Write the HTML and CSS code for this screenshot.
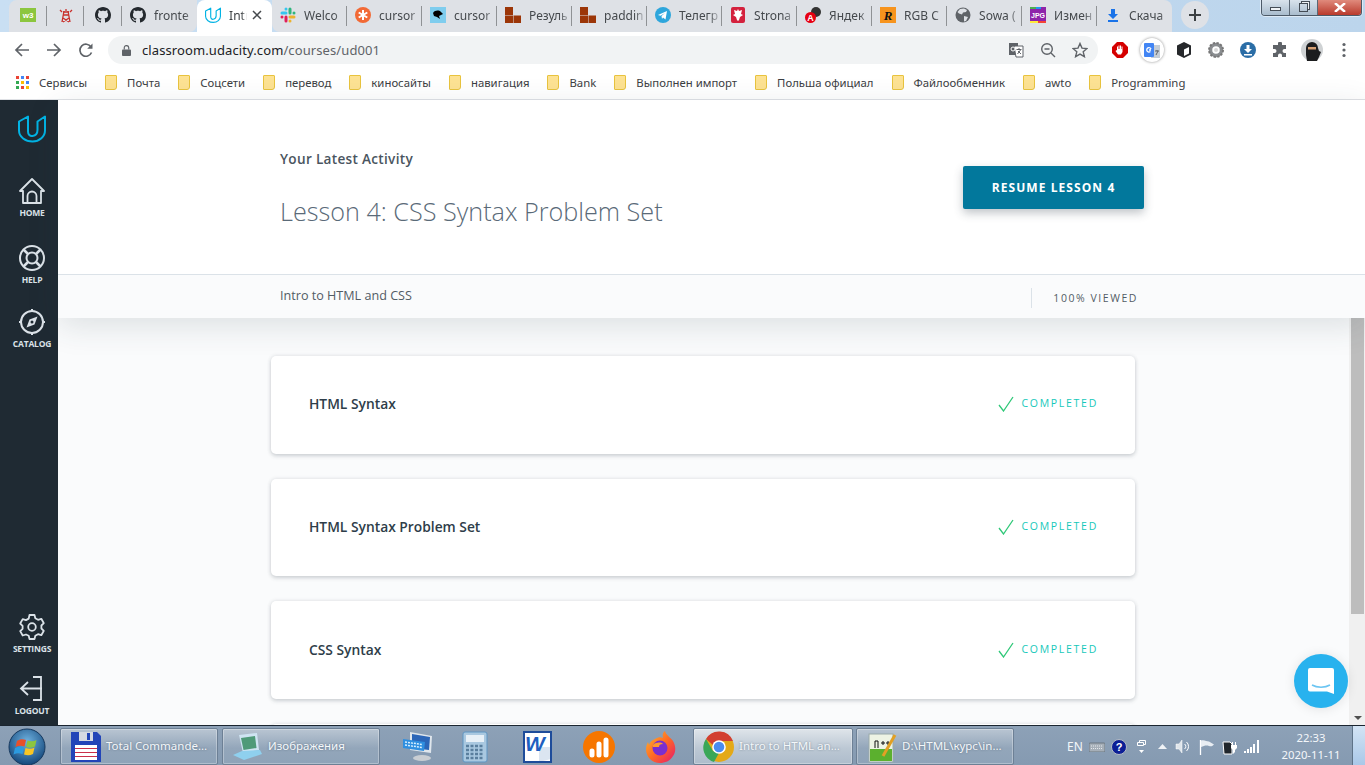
FILE: index.html
```html
<!DOCTYPE html>
<html lang="en">
<head>
    <meta charset="UTF-8">
    <meta name="viewport" content="width=device-width, initial-scale=1.0">
    <title>Intro to HTML and CSS</title>
    <link rel="stylesheet" href="styles.css">
</head>
<body>

    <svg class="defs" width="0" height="0">
        <symbol id="github" viewBox="0 0 16 16"><path fill="#24292e" d="M8 0C3.58 0 0 3.58 0 8c0 3.54 2.29 6.53 5.47 7.59.4.07.55-.17.55-.38 0-.19-.01-.82-.01-1.49-2.01.37-2.53-.49-2.69-.94-.09-.23-.48-.94-.82-1.13-.28-.15-.68-.52-.01-.53.63-.01 1.08.58 1.23.82.72 1.21 1.87.87 2.33.66.07-.52.28-.87.51-1.07-1.78-.2-3.64-.89-3.64-3.95 0-.87.31-1.59.82-2.15-.08-.2-.36-1.02.08-2.12 0 0 .67-.21 2.2.82.64-.18 1.32-.27 2-.27.68 0 1.36.09 2 .27 1.53-1.04 2.2-.82 2.2-.82.44 1.1.16 1.92.08 2.12.51.56.82 1.27.82 2.15 0 3.07-1.87 3.75-3.65 3.95.29.25.54.73.54 1.48 0 1.07-.01 1.93-.01 2.2 0 .21.15.46.55.38A8.013 8.013 0 0016 8c0-4.42-3.58-8-8-8z"/></symbol>
        <symbol id="udacity" viewBox="0 0 28 28"><path fill="none" stroke="#02b3e4" stroke-width="2" stroke-linejoin="round" d="M1 7l9-5v15c0 3 2 5 4.500 4.500 3-.5 5-3 5-6V7l7.500-5v14c0 6-5.500 11-12.500 11S1 22.500 1 16z"/></symbol>
        <symbol id="bricks" viewBox="0 0 16 16"><path fill="#9c3608" d="M0 0h8v8H0zM0 8.500h8V16H0zM8.500 8.500H16V16H8.500z"/></symbol>
        <symbol id="check" viewBox="0 0 16 16"><path fill="none" stroke="#2fc878" stroke-width="1.300" d="M1 9l4.500 6L15 1"/></symbol>
    </svg>

    <header class="chrome">
        <div class="tabstrip">
            <div class="tab tab-pin">
                <svg class="favicon" viewBox="0 0 16 16"><rect width="16" height="14" y="1" fill="#8cc63f"/><text x="8" y="11" class="fav-text">w3</text></svg>
            </div>
            <div class="tab tab-pin">
                <svg class="favicon" viewBox="0 0 16 16"><path fill="none" stroke="#c9302c" stroke-width="1.300" d="M8 2v2M5 5h6M6 4l-2 11M10 4l2 11M5.500 8h5M5 11l6 4M11 11l-6 4M2 3l2 2M14 3l-2 2"/></svg>
            </div>
            <div class="tab tab-pin">
                <svg class="favicon"><use href="#github"/></svg>
            </div>
            <div class="tab">
                <svg class="favicon"><use href="#github"/></svg>
                <span class="tab-title">fronte</span>
            </div>
            <div class="tab tab-active">
                <svg class="favicon"><use href="#udacity"/></svg>
                <span class="tab-title">Intr</span>
                <svg class="tab-close" viewBox="0 0 10 10"><path stroke="#45494d" stroke-width="1.500" d="M1 1l8 8M9 1l-8 8"/></svg>
            </div>
            <div class="tab">
                <svg class="favicon" viewBox="0 0 16 16"><g fill="none" stroke-width="3" stroke-linecap="round"><path stroke="#36c5f0" d="M2 6h4M6 2h0"/><path stroke="#2eb67d" d="M10 2v4M14 6h0"/><path stroke="#ecb22e" d="M10 10h4M10 14h0"/><path stroke="#e01e5a" d="M6 10v4M2 10h0"/></g></svg>
                <span class="tab-title">Welco</span>
            </div>
            <div class="tab">
                <svg class="favicon" viewBox="0 0 16 16"><circle cx="8" cy="8" r="8" fill="#f26a36"/><path stroke="#fff" stroke-width="2" d="M8 3v10M3.700 5.500l8.600 5M3.700 10.500l8.600-5"/></svg>
                <span class="tab-title">cursor</span>
            </div>
            <div class="tab">
                <svg class="favicon" viewBox="0 0 16 16"><rect width="16" height="16" fill="#7fcdee"/><path d="M3 6c2-3 6-3 8-1l2 2-2 1-2 1 1 3-3-2-3-1z"/></svg>
                <span class="tab-title">cursor</span>
            </div>
            <div class="tab">
                <svg class="favicon"><use href="#bricks"/></svg>
                <span class="tab-title">Резуль</span>
            </div>
            <div class="tab">
                <svg class="favicon"><use href="#bricks"/></svg>
                <span class="tab-title">paddin</span>
            </div>
            <div class="tab">
                <svg class="favicon" viewBox="0 0 16 16"><circle cx="8" cy="8" r="8" fill="#2ea6dc"/><path fill="#fff" d="M3 8l9-4-1.500 8.500L8 10.500l-1 1.500-.5-3 3.500-3-4.500 2.700z"/></svg>
                <span class="tab-title">Телегр</span>
            </div>
            <div class="tab">
                <svg class="favicon" viewBox="0 0 16 16"><rect x="1" width="14" height="16" rx="2" fill="#d4213d"/><path fill="#fff" d="M8 2l1 2 3-1-1 4 2 1-3 2-1 3-1 1-1-1-1-3-3-2 2-1-1-4 3 1z"/></svg>
                <span class="tab-title">Strona</span>
            </div>
            <div class="tab">
                <svg class="favicon" viewBox="0 0 16 16"><circle cx="11" cy="5" r="5" fill="#333"/><circle cx="5.500" cy="10.500" r="5.500" fill="#e60012"/><text x="5.500" y="14" class="fav-text fav-a">A</text></svg>
                <span class="tab-title">Яндек</span>
            </div>
            <div class="tab">
                <svg class="favicon" viewBox="0 0 16 16"><rect width="16" height="16" fill="#f7941e"/><text x="8" y="13" class="fav-r">R</text></svg>
                <span class="tab-title">RGB C</span>
            </div>
            <div class="tab">
                <svg class="favicon" viewBox="0 0 16 16"><circle cx="8" cy="8" r="7.500" fill="#5f6368"/><path fill="#dee1e6" d="M9 1.500l3 1.500-1 2-3 .5-1 2-3-1-1.500-1.500L5 2zM9 9l4 1-2 4-2 .5z"/></svg>
                <span class="tab-title">Sowa (</span>
            </div>
            <div class="tab">
                <svg class="favicon" viewBox="0 0 16 16"><rect width="16" height="16" fill="#8e24aa"/><rect width="6" height="2" fill="#4caf50"/><rect x="6" width="5" height="2" fill="#2196f3"/><rect y="14" width="8" height="2" fill="#ffeb3b"/><rect x="8" y="14" width="8" height="2" fill="#f44336"/><text x="8" y="11" class="fav-text fav-jpg">JPG</text></svg>
                <span class="tab-title">Измен</span>
            </div>
            <div class="tab">
                <svg class="favicon" viewBox="0 0 16 16"><path fill="#1a73e8" d="M6 2h4v5h3l-5 5-5-5h3zM3 13h10v2H3z"/></svg>
                <span class="tab-title">Скача</span>
            </div>
            <div class="new-tab">
                <svg width="12" height="12" viewBox="0 0 12 12"><path stroke="#3c4043" stroke-width="2" d="M6 0v12M0 6h12"/></svg>
            </div>
            <div class="window-buttons">
                <span class="win-btn"><i class="win-min"></i></span>
                <span class="win-btn"><i class="win-max"></i></span>
                <span class="win-btn win-close">
                    <svg width="12" height="9" viewBox="0 0 12 9"><path stroke="#fff" stroke-width="2.400" d="M1 0l10 9M11 0L1 9"/></svg>
                </span>
            </div>
        </div>

        <div class="toolbar">
            <div class="nav-buttons">
                <svg class="tool-icon" viewBox="0 0 16 16"><path fill="none" stroke="#5f6368" stroke-width="1.700" d="M15 8H2M8 2L2 8l6 6"/></svg>
                <svg class="tool-icon" viewBox="0 0 16 16"><path fill="none" stroke="#5f6368" stroke-width="1.700" d="M1 8h13M8 2l6 6-6 6"/></svg>
                <svg class="tool-icon" viewBox="0 0 16 16"><path fill="none" stroke="#5f6368" stroke-width="1.700" d="M13.500 10.500A6 6 0 1 1 13 5"/><path fill="#5f6368" d="M14.500 1.500v5.300H9.200z"/></svg>
            </div>
            <div class="omnibox">
                <svg class="lock" viewBox="0 0 10 12"><path fill="#5f6368" d="M1 5h8a1 1 0 0 1 1 1v5a1 1 0 0 1-1 1H1a1 1 0 0 1-1-1V6a1 1 0 0 1 1-1z"/><path fill="none" stroke="#5f6368" stroke-width="1.300" d="M2.500 5V3a2.500 2.500 0 0 1 5 0v2"/></svg>
                <span class="url">classroom.udacity.com<span class="url-path">/courses/ud001</span></span>
                <div class="omni-icons">
                    <svg class="tool-icon" viewBox="0 0 16 16"><rect x="1" y="1" width="9" height="12" fill="#5f6368"/><path fill="#fff" stroke="#5f6368" d="M6 4h9v11H8z"/><path stroke="#5f6368" fill="none" d="M8.500 7.500h5M11 6v2M9.500 12l3-4M10 9l3 3"/><circle cx="5" cy="7" r="2" fill="none" stroke="#fff"/></svg>
                    <svg class="tool-icon" viewBox="0 0 16 16"><circle cx="7" cy="7" r="5.300" fill="none" stroke="#5f6368" stroke-width="1.400"/><path stroke="#5f6368" stroke-width="1.400" d="M4.500 7h5M11 11l4 4"/></svg>
                    <svg class="tool-icon" viewBox="0 0 16 16"><path fill="none" stroke="#5f6368" stroke-width="1.400" d="M8 1.500l2 4.600 5 .4-3.800 3.300 1.200 4.900L8 12.100l-4.400 2.600 1.200-4.900L1 6.500l5-.4z"/></svg>
                </div>
            </div>
            <div class="extensions">
                <span class="ext"><svg class="ext-icon" viewBox="0 0 16 16"><path fill="#d50000" d="M5 0h6l5 5v6l-5 5H5l-5-5V5z"/><path fill="#fff" d="M5 8V4.500h1V7h.5V3.500h1V7H8V3.500h1V7h.5V4.500h1V10l-1.500 2.500H6L3.500 9l1-.8z"/></svg></span>
                <span class="ext ext-ring"><svg class="ext-icon" viewBox="0 0 16 16"><rect x="7" y="3" width="9" height="13" fill="#c5cdd6"/><rect width="10" height="14" y="1" rx="1" fill="#4285f4"/><path fill="none" stroke="#fff" stroke-width="1.300" d="M7 7a2.200 2.200 0 1 0-.6 2.500M5 8h2"/><path stroke="#5f6368" d="M11 9h4M13 8v1M12 13l2-4"/></svg></span>
                <span class="ext"><svg class="ext-icon" viewBox="0 0 16 16"><path fill="#26282b" d="M8 0l7 3.500v9L8 16l-7-3.500v-9z"/><path fill="#fff" d="M8 7.500l5-2.500v6.500L8 14z"/></svg></span>
                <span class="ext"><svg class="ext-icon" viewBox="0 0 16 16"><circle cx="8" cy="8" r="5.500" fill="none" stroke="#8a8d90" stroke-width="3.500"/><circle cx="8" cy="8" r="7" fill="none" stroke="#777" stroke-width="2" stroke-dasharray="2.200 1.500"/><circle cx="8" cy="8" r="2" fill="#d8d8d8"/></svg></span>
                <span class="ext"><svg class="ext-icon" viewBox="0 0 16 16"><circle cx="8" cy="8" r="8" fill="#2a6da6"/><path fill="#fff" d="M6.500 3h3v4H12L8 11 4 7h2.500zM4 12h8v1.500H4z"/></svg></span>
                <span class="ext"><svg class="ext-icon" viewBox="0 0 16 16"><path fill="#5f6368" d="M6 1.500a2 2 0 0 1 4 0V3h4v4h-1.500a2 2 0 0 0 0 4H14v4h-4v-1.500a2 2 0 0 0-4 0V15H1v-4h1.500a2 2 0 0 0 0-4H1V3h5z"/></svg></span>
                <span class="ext"><svg class="ext-avatar" viewBox="0 0 22 22"><circle cx="11" cy="11" r="11" fill="#cfd2d4"/><path fill="#1c1d1f" d="M5 9a6 6 0 0 1 12 0l1 3 2 1-2 5-2 4H6l-1-6z"/><rect x="7" y="8" width="8" height="2.500" fill="#d6a074"/></svg></span>
                <span class="ext"><svg width="4" height="16" viewBox="0 0 4 16"><g fill="#5f6368"><circle cx="2" cy="2.500" r="1.600"/><circle cx="2" cy="8" r="1.600"/><circle cx="2" cy="13.500" r="1.600"/></g></svg></span>
            </div>
        </div>

        <div class="bookmarks">
            <span class="bookmark">
                <svg class="apps" viewBox="0 0 13 13"><g><rect width="3" height="3" fill="#ea4335"/><rect x="5" width="3" height="3" fill="#4285f4"/><rect x="10" width="3" height="3" fill="#ea4335"/><rect y="5" width="3" height="3" fill="#34a853"/><rect x="5" y="5" width="3" height="3" fill="#fbbc05"/><rect x="10" y="5" width="3" height="3" fill="#4285f4"/><rect y="10" width="3" height="3" fill="#34a853"/><rect x="5" y="10" width="3" height="3" fill="#ea4335"/><rect x="10" y="10" width="3" height="3" fill="#fbbc05"/></g></svg>
                Сервисы
            </span>
            <span class="bookmark"><i class="folder"></i>Почта</span>
            <span class="bookmark"><i class="folder"></i>Соцсети</span>
            <span class="bookmark"><i class="folder"></i>перевод</span>
            <span class="bookmark"><i class="folder"></i>киносайты</span>
            <span class="bookmark"><i class="folder"></i>навигация</span>
            <span class="bookmark"><i class="folder"></i>Bank</span>
            <span class="bookmark"><i class="folder"></i>Выполнен импорт</span>
            <span class="bookmark"><i class="folder"></i>Польша официал</span>
            <span class="bookmark"><i class="folder"></i>Файлообменник</span>
            <span class="bookmark"><i class="folder"></i>awto</span>
            <span class="bookmark"><i class="folder"></i>Programming</span>
        </div>
    </header>

    <div class="app">
        <nav class="sidebar">
            <div class="sidebar-top">
                <svg class="logo"><use href="#udacity"/></svg>
                <a class="nav-item">
                    <svg class="nav-icon" viewBox="0 0 26 26"><path fill="none" stroke="#dbe2e8" stroke-width="1.800" stroke-linejoin="round" d="M1 13L13 1l12 12h-3v12H4V13z"/><path fill="none" stroke="#dbe2e8" stroke-width="1.800" d="M8.500 25v-7a4.500 4.500 0 0 1 9 0v7"/></svg>
                    HOME
                </a>
                <a class="nav-item nav-help">
                    <svg class="nav-icon" viewBox="0 0 26 26"><g fill="none" stroke="#dbe2e8" stroke-width="2"><circle cx="13" cy="13" r="12"/><circle cx="13" cy="13" r="5.500"/><path stroke-width="2.500" d="M4.500 4.500l4.500 4.500M21.500 4.500L17 9M4.500 21.500L9 17M21.500 21.500L17 17"/></g></svg>
                    HELP
                </a>
                <a class="nav-item nav-catalog">
                    <svg class="nav-icon" viewBox="0 0 26 26"><circle cx="13" cy="13" r="11" fill="none" stroke="#dbe2e8" stroke-width="2"/><path stroke="#dbe2e8" stroke-width="2" d="M13 0v2M13 24v2M0 13h2M24 13h2"/><path fill="#dbe2e8" d="M18.500 7.500l-3 8-8 3 3-8z"/><circle cx="13" cy="13" r="1.500" fill="#1f2a33"/></svg>
                    CATALOG
                </a>
            </div>
            <div class="sidebar-bottom">
                <a class="nav-item">
                    <svg class="nav-icon" viewBox="0 0 26 26"><path fill="none" stroke="#dbe2e8" stroke-width="1.800" stroke-linejoin="round" d="M10.500 1h5l.8 3.300 2.700 1.500 3.300-1 2.500 4.400-2.400 2.300v3l2.400 2.300-2.500 4.400-3.300-1-2.700 1.500-.8 3.300h-5l-.8-3.300L7 20.500l-3.300 1-2.500-4.400 2.400-2.300v-3L1.200 9.500l2.500-4.400 3.300 1 2.700-1.500z"/><circle cx="13" cy="13" r="3.800" fill="none" stroke="#dbe2e8" stroke-width="1.800"/></svg>
                    SETTINGS
                </a>
                <a class="nav-item nav-logout">
                    <svg class="nav-icon" viewBox="0 0 26 26"><path fill="none" stroke="#dbe2e8" stroke-width="1.800" d="M14 1h8v23h-8M23 12.500H3M9 6l-7 6.500L9 19"/></svg>
                    LOGOUT
                </a>
            </div>
        </nav>

        <main class="content">
            <div class="course-head">
                <div class="hero">
                    <div class="hero-text">
                        <h4>Your Latest Activity</h4>
                        <h2>Lesson 4: CSS Syntax Problem Set</h2>
                    </div>
                    <button class="resume-button">RESUME LESSON 4</button>
                </div>
                <div class="course-bar">
                    <span class="course-name">Intro to HTML and CSS</span>
                    <span class="viewed">100% VIEWED</span>
                </div>
            </div>

            <div class="scroll-row">
                <div class="lessons">
                    <div class="lesson-card">
                        <span class="lesson-name">HTML Syntax</span>
                        <span class="status"><svg class="status-check"><use href="#check"/></svg>COMPLETED</span>
                    </div>
                    <div class="lesson-card">
                        <span class="lesson-name">HTML Syntax Problem Set</span>
                        <span class="status"><svg class="status-check"><use href="#check"/></svg>COMPLETED</span>
                    </div>
                    <div class="lesson-card">
                        <span class="lesson-name">CSS Syntax</span>
                        <span class="status"><svg class="status-check"><use href="#check"/></svg>COMPLETED</span>
                    </div>
                    <div class="lesson-card"></div>
                </div>
                <div class="scrollbar">
                    <div class="scroll-thumb"></div>
                    <svg class="scroll-arrow" width="8" height="4" viewBox="0 0 8 4"><path fill="#505050" d="M0 0h8L4 4z"/></svg>
                </div>
            </div>
        </main>

        <div class="chat-launcher">
            <svg width="26" height="26" viewBox="0 0 26 26"><path fill="#fff" d="M2 0h22a2 2 0 0 1 2 2v24l-7-2.500H2a2 2 0 0 1-2-2V2a2 2 0 0 1 2-2z"/><path fill="none" stroke="#6bc5f2" stroke-width="1.500" d="M4 17c5 3 13 3 18 0"/></svg>
        </div>
    </div>

    <footer class="taskbar">
        <div class="start">
            <svg width="38" height="38" viewBox="0 0 38 38">
                <defs><radialGradient id="orb" cx="50%" cy="35%" r="70%"><stop offset="0" stop-color="#6fb2e0"/><stop offset="1" stop-color="#0d3f73"/></radialGradient></defs>
                <circle cx="19" cy="19" r="18" fill="url(#orb)" stroke="#17395e"/>
                <path fill="#e8502a" d="M9 13c3-2 6-2 9-1l-1.500 6.500c-3-1-6-1-9 .5z"/>
                <path fill="#8cc63f" d="M19.500 12.500c3 1 6 1 9-.5l-1.500 6.500c-3 1.500-6 1.500-9 .5z"/>
                <path fill="#2c9be0" d="M7 20c3-1.500 6-1.500 9-.5L14.500 26c-3-1-6-1-9 .5z"/>
                <path fill="#f9c623" d="M17.500 20c3 1 6 1 9-.5L25 26c-3 1.500-6 1.500-9 .5z"/>
            </svg>
        </div>
        <div class="task">
            <svg class="task-icon" viewBox="0 0 32 32"><path fill="#2244b8" d="M1 1h26l4 4v26H1z"/><rect x="9" y="1" width="14" height="9" fill="#d5d9e2"/><rect x="17" y="2" width="3" height="7" fill="#2244b8"/><rect x="5" y="14" width="22" height="15" fill="#fff"/><path stroke="#c9304a" d="M5 17.500h22M5 21.500h22M5 25.500h22"/></svg>
            <span>Total Commande...</span>
        </div>
        <div class="task">
            <svg class="task-icon" viewBox="0 0 32 32"><path fill="#cfe4f2" d="M7 4l18-2 2 17-16 3z"/><path fill="#4f9a78" d="M9 7l14-2 1.500 12-13 2z"/><path fill="#8fd0ee" d="M1 24l9-4 18-1 2 4-18 6z"/></svg>
            <span>Изображения</span>
        </div>
        <div class="pins">
            <svg class="pin pin-first" viewBox="0 0 32 32"><path fill="#dfe6ec" d="M8 1l22 4-1 17-21-3z"/><path fill="#2b66b8" d="M10 3l18 3-1 13-17-2z"/><path fill="#2f8fe0" d="M1 8l22 3-1 9-21-3z"/><path stroke="#d8f0ff" stroke-width="1.500" stroke-dasharray="2 1" d="M3 11l17 2.500M3 14l17 2.500"/><ellipse cx="20" cy="27" rx="9" ry="3" fill="#c9ced3"/></svg>
            <svg class="pin" viewBox="0 0 32 32"><rect x="4" y="1" width="24" height="30" rx="2" fill="#a9c8e0" stroke="#5f95c2"/><rect x="7" y="4" width="18" height="7" fill="#e7f0f7"/><path stroke="#5a7f9e" stroke-width="2.500" stroke-dasharray="3 1.500" d="M7 15h18M7 19h18M7 23h18M7 27h18"/></svg>
            <svg class="pin" viewBox="0 0 32 32"><path fill="#fff" d="M3 1h27v30H3z"/><path fill="#dbe5f1" d="M18 16h12v12l-12 3z"/><rect x="3" y="1" width="27" height="30" fill="none" stroke="#1e4c9a" stroke-width="2"/><text x="14" y="20" class="pin-word">W</text></svg>
            <svg class="pin" viewBox="0 0 32 32"><circle cx="16" cy="16" r="16" fill="#f67600"/><path stroke="#fff" stroke-width="5" stroke-linecap="round" d="M9 24v-4M16 24V13M23 24V9"/></svg>
            <svg class="pin" viewBox="0 0 32 32">
                <defs><linearGradient id="fox" x1="0" y1="0" x2="1" y2="1"><stop offset="0" stop-color="#ffbd2e"/><stop offset=".5" stop-color="#ff6a24"/><stop offset="1" stop-color="#e5186e"/></linearGradient></defs>
                <path fill="url(#fox)" d="M20 0c1 4 5 6 8 10 3 5 3 11 0 15-3 5-8 7-13 7C7 32 1 26 1 18c0-3 1-5 2-7l1 3c1-3 3-5 6-6 3-2 6-2 8-1-1-3 0-6 2-7z"/>
                <circle cx="15" cy="17" r="7.500" fill="#7a2fd0"/><path fill="#ff9a2e" d="M8 14c3-3 8-3 10-1-3 0-4 1-4 3l-6 0z"/>
            </svg>
        </div>
        <div class="task task-active">
            <svg class="task-icon" viewBox="0 0 32 32"><circle cx="16" cy="16" r="15" fill="#e4a917"/><path fill="#d23f31" d="M3 8A15 15 0 0 1 30 10H16a6 6 0 0 0-6 4z"/><path fill="#3aa757" d="M3 8l7 12 6 2-5 9A15 15 0 0 1 3 8z"/><circle cx="16" cy="16" r="6.800" fill="#fff"/><circle cx="16" cy="16" r="5.300" fill="#4a8cf0"/></svg>
            <span>Intro to HTML an...</span>
        </div>
        <div class="task">
            <svg class="task-icon" viewBox="0 0 32 32"><rect x="3" y="3" width="24" height="28" fill="#eef3e4" stroke="#9aa"/><path fill="#5bb02e" d="M4 18h22v12H4z"/><path stroke="#111" fill="none" d="M9 17v-7h3v7M15 12h4M17 10v4M20 12h4M22 10v4"/><path stroke="#e2a024" stroke-width="3" d="M29 4L17 25"/></svg>
            <span>D:\HTML\курс\in...</span>
        </div>
        <div class="tray">
            <span class="tray-item tray-lang">EN</span>
            <span class="tray-item"><svg width="16" height="11" viewBox="0 0 16 11"><rect y="2" width="16" height="9" rx="1" fill="#a6afb8" stroke="#6b7680"/><path stroke="#e4e8ec" stroke-dasharray="1 1" d="M2 5h12M2 7.500h12"/></svg></span>
            <span class="tray-item"><svg width="16" height="16" viewBox="0 0 16 16"><circle cx="8" cy="8" r="7.500" fill="#0c1f96" stroke="#b5bcc4"/><text x="8" y="12" class="tray-q">?</text></svg></span>
            <span class="tray-item"><svg width="9" height="15" viewBox="0 0 9 15"><path fill="none" stroke="#fff" d="M2.500 3.500v-2h6v4h-2M.500 3.500h6v3h-6z"/><path fill="#fff" d="M2 11h5l-2.500 3z"/></svg></span>
            <span class="tray-item tray-arrow"><svg width="9" height="5" viewBox="0 0 9 5"><path fill="#f0f3f6" d="M4.500 0L9 5H0z"/></svg></span>
            <span class="tray-item"><svg width="16" height="15" viewBox="0 0 16 15"><path fill="#dfe5ea" stroke="#fff" stroke-width=".5" d="M1 5h3l3-4v13l-3-4H1z"/><path fill="none" stroke="#fff" d="M9.500 5a3 3 0 0 1 0 5M11.500 3a6 6 0 0 1 0 9"/></svg></span>
            <span class="tray-item tray-flag"><svg width="16" height="16" viewBox="0 0 16 16"><path fill="none" stroke="#fff" stroke-width="1.300" d="M1.500 1v15"/><path fill="#e8edf2" d="M2 1.500c4-1 5 1 8 1l5 3c-2 2-3 2-5 1.500-3-1-5 0-8 1z"/></svg></span>
            <span class="tray-item"><svg width="16" height="16" viewBox="0 0 16 16"><path fill="#20262c" stroke="#fff" d="M1 3h7l2 2v10H2z"/><path fill="#fff" d="M9 6h1V3h1v3h2V3h1v3h1v3l-2 2v2l-2 2v-4L9 9z"/></svg></span>
            <span class="tray-item"><svg width="16" height="13" viewBox="0 0 16 13"><path fill="#fff" d="M0 11h2v2H0zM3 9h2v4H3zM6 7h2v6H6zM9 4h2v9H9zM13 0h2v13h-2z"/></svg></span>
            <div class="clock">
                <span>22:33</span>
                <span>2020-11-11</span>
            </div>
            <span class="show-desktop"></span>
        </div>
    </footer>

</body>
</html>
```

FILE: styles.css
```css
* {
    margin: 0;
    padding: 0;
    box-sizing: border-box;
}

html, body {
    height: 100%;
}

body {
    display: flex;
    flex-direction: column;
    height: 765px;
    overflow: hidden;
    font-family: 'Open Sans', sans-serif;
    color: #2e3d49;
    background: #fff;
}

.defs {
    position: absolute;
}

.chrome {
    height: 100px;
    flex: none;
}

/* tab strip */
.tabstrip {
    position: relative;
    display: flex;
    height: 32px;
    padding-left: 9px;
    background: linear-gradient(90deg, #c9dff3 0, #bcd5ec 100%);
    font-family: 'Noto Sans', sans-serif;
    font-size: 12px;
    color: #45494d;
}

.tab {
    position: relative;
    display: flex;
    align-items: center;
    gap: 8px;
    width: 75px;
    padding: 0 0 2px 8px;
    background: #dee1e6;
}

.tab::after {
    content: "";
    position: absolute;
    right: 0;
    top: 6px;
    width: 1px;
    height: 20px;
    background: #8f9295;
}

.tab-pin {
    width: 37.7px;
    justify-content: center;
    padding-left: 0;
}

.tab-active {
    background: #fff;
    border-radius: 8px 8px 0 0;
    color: #3c4043;
}

.tab-active::after,
.tab:nth-child(4)::after,
.tab:nth-child(17)::after {
    display: none;
}

.tab:nth-child(4) {
    border-bottom-right-radius: 8px;
}

.tab:nth-child(6) {
    border-bottom-left-radius: 8px;
}

.tab:nth-child(17) {
    border-top-right-radius: 8px;
}

.tab:first-child {
    border-top-left-radius: 8px;
}

.favicon {
    flex: none;
    width: 16px;
    height: 16px;
}

.fav-text {
    font: 700 8px 'Liberation Sans', sans-serif;
    fill: #fff;
    text-anchor: middle;
}

.fav-a {
    font-size: 9px;
}

.fav-jpg {
    font-size: 7px;
}

.fav-r {
    font: italic 700 13px 'Liberation Serif', serif;
    fill: #111;
    text-anchor: middle;
}

.tab-title {
    flex: 1;
    min-width: 0;
    white-space: nowrap;
    -webkit-mask-image: linear-gradient(90deg, #000 70%, transparent 100%);
    mask-image: linear-gradient(90deg, #000 70%, transparent 100%);
}

.tab-close {
    flex: none;
    width: 10px;
    height: 10px;
}

.tab-active .tab-title {
    flex: none;
    width: 18px;
}

.tab-active .tab-close {
    margin-left: -3px;
}

.new-tab {
    display: flex;
    align-items: center;
    justify-content: center;
    width: 28px;
    height: 28px;
    margin: 1px 0 0 9px;
    border-radius: 50%;
    background: #dee1e6;
}

.window-buttons {
    position: absolute;
    top: 0;
    right: 3px;
    display: flex;
    width: 101px;
    height: 16px;
    border: 1px solid #4d5a68;
    border-top: none;
    border-radius: 0 0 4px 4px;
    overflow: hidden;
    box-shadow: 0 0 0 1px rgba(255, 255, 255, 0.5);
}

.win-btn {
    display: flex;
    align-items: center;
    justify-content: center;
    width: 28px;
    background: linear-gradient(#d9e3ec, #a9bccd);
    border-right: 1px solid #5b6875;
}

.win-min {
    width: 11px;
    height: 4px;
    margin-top: 2px;
    background: #eef2f5;
    border: 1px solid #444c55;
}

.win-max {
    width: 9px;
    height: 9px;
    border: 1px solid #444c55;
    box-shadow: 2px -2px 0 -1px #eef2f5, 2px -2px 0 0 #444c55;
}

.win-close {
    flex: 1;
    border-right: none;
    background: linear-gradient(#e08a7c, #b93a2c);
}

/* toolbar */
.toolbar {
    display: flex;
    align-items: center;
    height: 36px;
    background: #fff;
}

.nav-buttons {
    display: flex;
    gap: 16px;
    width: 108px;
    padding-left: 14px;
}

.tool-icon {
    flex: none;
    width: 16px;
    height: 16px;
}

.omnibox {
    display: flex;
    align-items: center;
    width: 990px;
    height: 28px;
    padding: 0 10px 0 14px;
    border-radius: 14px;
    background: #f1f3f4;
}

.lock {
    width: 9px;
    height: 11px;
    margin-right: 11px;
}

.url {
    flex: 1;
    font-family: 'Noto Sans', sans-serif;
    font-size: 13px;
    letter-spacing: 0.1px;
    color: #202124;
}

.url-path {
    color: #5f6368;
}

.omni-icons {
    display: flex;
    gap: 16px;
}

.extensions {
    display: flex;
    align-items: center;
    margin-left: 6px;
}

.ext {
    display: flex;
    align-items: center;
    justify-content: center;
    width: 32px;
    height: 32px;
}

.ext-icon {
    width: 16px;
    height: 16px;
}

.ext-ring {
    width: 24px;
    height: 24px;
    margin: 0 4px;
    border-radius: 50%;
    background: #fff;
    box-shadow: 0 0 3px rgba(0, 0, 0, 0.45);
}

.ext-avatar {
    width: 22px;
    height: 22px;
}

/* bookmarks bar */
.bookmarks {
    display: flex;
    align-items: center;
    gap: 18px;
    height: 32px;
    padding: 0 0 3px 16px;
    font-family: 'Noto Sans', sans-serif;
    font-size: 11.35px;
    color: #3c4043;
    background: #fff;
    border-bottom: 1px solid #dfe1e5;
}

.bookmark {
    display: flex;
    align-items: center;
    gap: 10px;
    white-space: nowrap;
}

.apps {
    width: 13px;
    height: 13px;
}

.folder {
    width: 12px;
    height: 15px;
    background: #fde293;
    border: 1px solid #e8c33e;
    border-radius: 1px 1px 3px 1px;
}

/* udacity app */
.app {
    position: relative;
    display: flex;
    flex: 1;
    min-height: 0;
}

.sidebar {
    display: flex;
    flex-direction: column;
    justify-content: space-between;
    flex: none;
    width: 58px;
    padding: 0 0 8px 6px;
    background: #1f2a33;
}

.sidebar-top,
.sidebar-bottom {
    display: flex;
    flex-direction: column;
    align-items: center;
}

.logo {
    width: 28px;
    height: 29px;
    margin: 14px 0 35px;
}

.nav-item {
    display: flex;
    flex-direction: column;
    align-items: center;
    gap: 3px;
    font-size: 8.5px;
    line-height: 12px;
    font-weight: 700;
    letter-spacing: -0.2px;
    color: #dbe2e8;
}

.nav-icon {
    width: 26px;
    height: 26px;
}

.nav-help {
    margin-top: 26px;
}

.nav-catalog {
    margin-top: 23px;
}

.nav-logout {
    margin-top: 21px;
}

.content {
    display: flex;
    flex-direction: column;
    flex: 1;
    min-width: 0;
    background: #fafbfc;
}

.course-head {
    position: relative;
    z-index: 2;
    flex: none;
    box-shadow: 0 8px 30px rgba(46, 61, 73, 0.14);
}

.hero {
    display: flex;
    align-items: flex-start;
    height: 174px;
    padding: 50px 221px 0 222px;
    justify-content: space-between;
    background: #fff;
}

.hero-text h4 {
    font-size: 13.6px;
    line-height: 18px;
    font-weight: 600;
    letter-spacing: 0.3px;
    color: #4a5560;
}

.hero-text h2 {
    margin-top: 26px;
    font-size: 25.2px;
    line-height: 34px;
    font-weight: 300;
    color: #5a6a78;
}

.resume-button {
    width: 181px;
    height: 43px;
    margin-top: 16px;
    border: none;
    border-radius: 2px;
    background: #02789c;
    color: #fff;
    font-family: inherit;
    font-size: 12px;
    font-weight: 700;
    letter-spacing: 1.08px;
    box-shadow: 0 4px 10px rgba(46, 61, 73, 0.3);
}

.course-bar {
    display: flex;
    align-items: center;
    justify-content: space-between;
    height: 44px;
    padding: 0 227px 0 222px;
    background: #fafbfc;
    border-top: 1px solid #dbe2e8;
}

.course-name {
    margin-bottom: 2px;
    font-size: 12.6px;
    color: #525c65;
}

.viewed {
    height: 20px;
    padding-left: 21px;
    margin-top: 2px;
    border-left: 1px solid #dbe2e8;
    font-size: 10.5px;
    line-height: 20px;
    letter-spacing: 1.55px;
    color: #525c65;
}

.scroll-row {
    display: flex;
    flex: 1;
    min-height: 0;
}

.lessons {
    flex: 1;
    min-width: 0;
    display: flex;
    flex-direction: column;
    gap: 25px;
    padding: 38px 0 0 213px;
    overflow: hidden;
}

.lesson-card {
    display: flex;
    flex: none;
    align-items: center;
    justify-content: space-between;
    width: 864px;
    height: 97.67px;
    padding: 0 37px 0 38px;
    border-radius: 5px;
    background: #fff;
    box-shadow: 0 0 4px rgba(46, 61, 73, 0.12), 0 2px 4px rgba(46, 61, 73, 0.18);
}

.lesson-name {
    margin-bottom: 2px;
    font-size: 13.8px;
    font-weight: 600;
    color: #2e3d49;
}

.status {
    display: flex;
    align-items: center;
    gap: 7px;
    padding-bottom: 3px;
    font-size: 10.5px;
    letter-spacing: 1.72px;
    color: #15c8ba;
}

.status-check {
    width: 16px;
    height: 16px;
    margin-top: 2px;
}

.scrollbar {
    display: flex;
    flex-direction: column;
    align-items: center;
    justify-content: space-between;
    flex: none;
    width: 16px;
    padding: 0 1px 5px 2px;
    background: #f0f0f0;
}

.scroll-thumb {
    width: 13px;
    height: 296px;
    background: #bdbdbd;
}

.chat-launcher {
    position: absolute;
    right: 17px;
    bottom: 17px;
    display: flex;
    align-items: center;
    justify-content: center;
    width: 54px;
    height: 54px;
    border-radius: 50%;
    background: #28b2ee;
    box-shadow: 0 1px 12px rgba(0, 0, 0, 0.1);
}

/* windows taskbar */
.taskbar {
    display: flex;
    align-items: stretch;
    flex: none;
    height: 40px;
    padding-top: 2px;
    background: linear-gradient(#8da1b7, #859ab1);
    border-top: 1px solid #1b2530;
    font-family: 'Noto Sans', sans-serif;
    font-size: 11.5px;
    color: #f4f7fa;
}

.start {
    display: flex;
    align-items: center;
    width: 60px;
    padding-left: 8px;
}

.task {
    display: flex;
    align-items: center;
    gap: 4px;
    width: 158px;
    margin-right: 4px;
    padding: 0 0 0 9px;
    border: 1px solid #6d8095;
    border-radius: 2px;
    background: linear-gradient(#b9c5d2, #93a6ba 55%, #8fa3b8);
    box-shadow: inset 0 0 0 1px rgba(255, 255, 255, 0.3);
    white-space: nowrap;
    text-shadow: 0 0 2px rgba(40, 60, 80, 0.5);
}

.task span {
    margin-bottom: 2px;
}

.task-active {
    width: 160px;
    margin-right: 3px;
    background: linear-gradient(#dfe5ea, #bcc8d4 55%, #aebccb);
}

.task-icon {
    flex: none;
    width: 32px;
    height: 32px;
}

.pins {
    display: flex;
    align-items: center;
    gap: 30px;
    width: 309px;
    padding-left: 18px;
}

.pin {
    flex: none;
    width: 32px;
    height: 32px;
}

.pin-first {
    margin-right: -5px;
}

.pin-word {
    font: italic 700 21px 'Liberation Sans', sans-serif;
    fill: #1e5fc0;
    text-anchor: middle;
}

.tray {
    display: flex;
    flex: 1;
    align-items: center;
    padding-left: 46px;
}

.tray-item {
    display: flex;
    align-items: center;
    justify-content: center;
    width: 22px;
    height: 100%;
}

.tray-lang {
    font-size: 12px;
}

.tray-arrow {
    width: 20px;
}

.tray-flag {
    width: 25px;
}

.tray-q {
    font: 700 11px 'Liberation Sans', sans-serif;
    fill: #fff;
    text-anchor: middle;
}

.clock {
    display: flex;
    flex-direction: column;
    align-items: center;
    gap: 1px;
    width: 64px;
    margin-left: 16px;
    font-size: 11.3px;
    line-height: 16px;
}

.show-desktop {
    align-self: stretch;
    width: 13px;
    margin: -2px 0 0 auto;
    background: linear-gradient(#d3e4f5, #a9c8e8);
    border-left: 1px solid #5e7388;
}
```
